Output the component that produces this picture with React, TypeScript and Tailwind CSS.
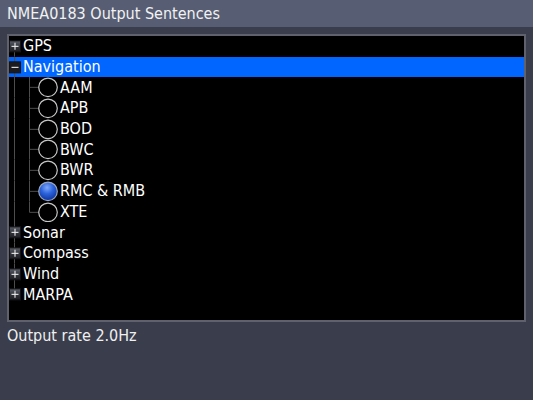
import React from "react";

type Row =
  | { kind: "group"; label: string; open?: boolean; selected?: boolean }
  | { kind: "item"; label: string; checked?: boolean; last?: boolean };

const rows: Row[] = [
  { kind: "group", label: "GPS" },
  { kind: "group", label: "Navigation", open: true, selected: true },
  { kind: "item", label: "AAM" },
  { kind: "item", label: "APB" },
  { kind: "item", label: "BOD" },
  { kind: "item", label: "BWC" },
  { kind: "item", label: "BWR" },
  { kind: "item", label: "RMC & RMB", checked: true },
  { kind: "item", label: "XTE", last: true },
  { kind: "group", label: "Sonar" },
  { kind: "group", label: "Compass" },
  { kind: "group", label: "Wind" },
  { kind: "group", label: "MARPA" },
];

const H = 20.7;
const LINE = "#4d4d4d";

function ExpandBox({ open, first, last }: { open?: boolean; first?: boolean; last?: boolean }) {
  const c = H / 2;
  return (
    <svg width="14" height={H} className="shrink-0">
      <defs>
        <linearGradient id="boxg" x1="0" y1="0" x2="0" y2="1">
          <stop offset="0" stopColor="#5c5f68" />
          <stop offset="0.5" stopColor="#33353c" />
          <stop offset="1" stopColor="#1e1f24" />
        </linearGradient>
      </defs>
      <line x1="5.5" y1={first ? c : 0} x2="5.5" y2={last ? c : H} stroke={LINE} />
      <rect x="0.5" y={c - 5.5} width="11" height="11" fill={open ? "#1c1c20" : "url(#boxg)"} stroke="#141418" />
      <line x1="2.5" y1={c} x2="9.5" y2={c} stroke="#ececec" strokeWidth="1.1" />
      {!open && <line x1="6" y1={c - 3.5} x2="6" y2={c + 3.5} stroke="#ececec" strokeWidth="1.1" />}
    </svg>
  );
}

function RadioGutter({ checked, last }: { checked?: boolean; last?: boolean }) {
  const c = H / 2;
  return (
    <svg width="51" height={H} className="shrink-0">
      <defs>
        <radialGradient id="radg" cx="0.45" cy="0.3" r="0.75">
          <stop offset="0" stopColor="#7fa8f8" />
          <stop offset="0.45" stopColor="#2a62dc" />
          <stop offset="1" stopColor="#0b2c90" />
        </radialGradient>
      </defs>
      <line x1="5.5" y1="0" x2="5.5" y2={H} stroke={LINE} />
      <line x1="20.5" y1="0" x2="20.5" y2={last ? c : H} stroke={LINE} />
      <line x1="20.5" y1={c} x2="29" y2={c} stroke={LINE} />
      <circle cx="39" cy={c} r="9.3" fill={checked ? "url(#radg)" : "#000"} stroke={checked ? "#9aa6bc" : "#c8c8c8"} strokeWidth="1.2" />
    </svg>
  );
}

export default function App() {
  const font = { fontFamily: '"DejaVu Sans Condensed", "DejaVu Sans", Verdana, sans-serif', fontStretch: "condensed" };
  return (
    <div className="flex h-[400px] w-[533px] flex-col bg-[#3a3d4b] text-white" style={font}>
      <div className="flex h-[27px] items-center bg-[#575e73] px-[7px] text-[16px] leading-none text-[#f2f2f2]">
        NMEA0183 Output Sentences
      </div>
      <div className="mx-[7px] mt-[7px] h-[288px] border-2 border-[#5f626c] bg-black">
        {rows.map((r, i) => (
          <div
            key={r.label}
            className={`flex h-[20.7px] items-center text-[16px] leading-none ${
              r.kind === "group" && r.selected ? "bg-[#0066ff]" : ""
            }`}
          >
            {r.kind === "group" ? (
              <>
                <ExpandBox open={r.open} first={i === 0} last={i === rows.length - 1} />
                <span>{r.label}</span>
              </>
            ) : (
              <>
                <RadioGutter checked={r.checked} last={r.last} />
                <span>{r.label}</span>
              </>
            )}
          </div>
        ))}
      </div>
      <div className="px-[7px] pt-[6px] text-[16px] leading-none text-[#f0f0f0]">Output rate 2.0Hz</div>
    </div>
  );
}
